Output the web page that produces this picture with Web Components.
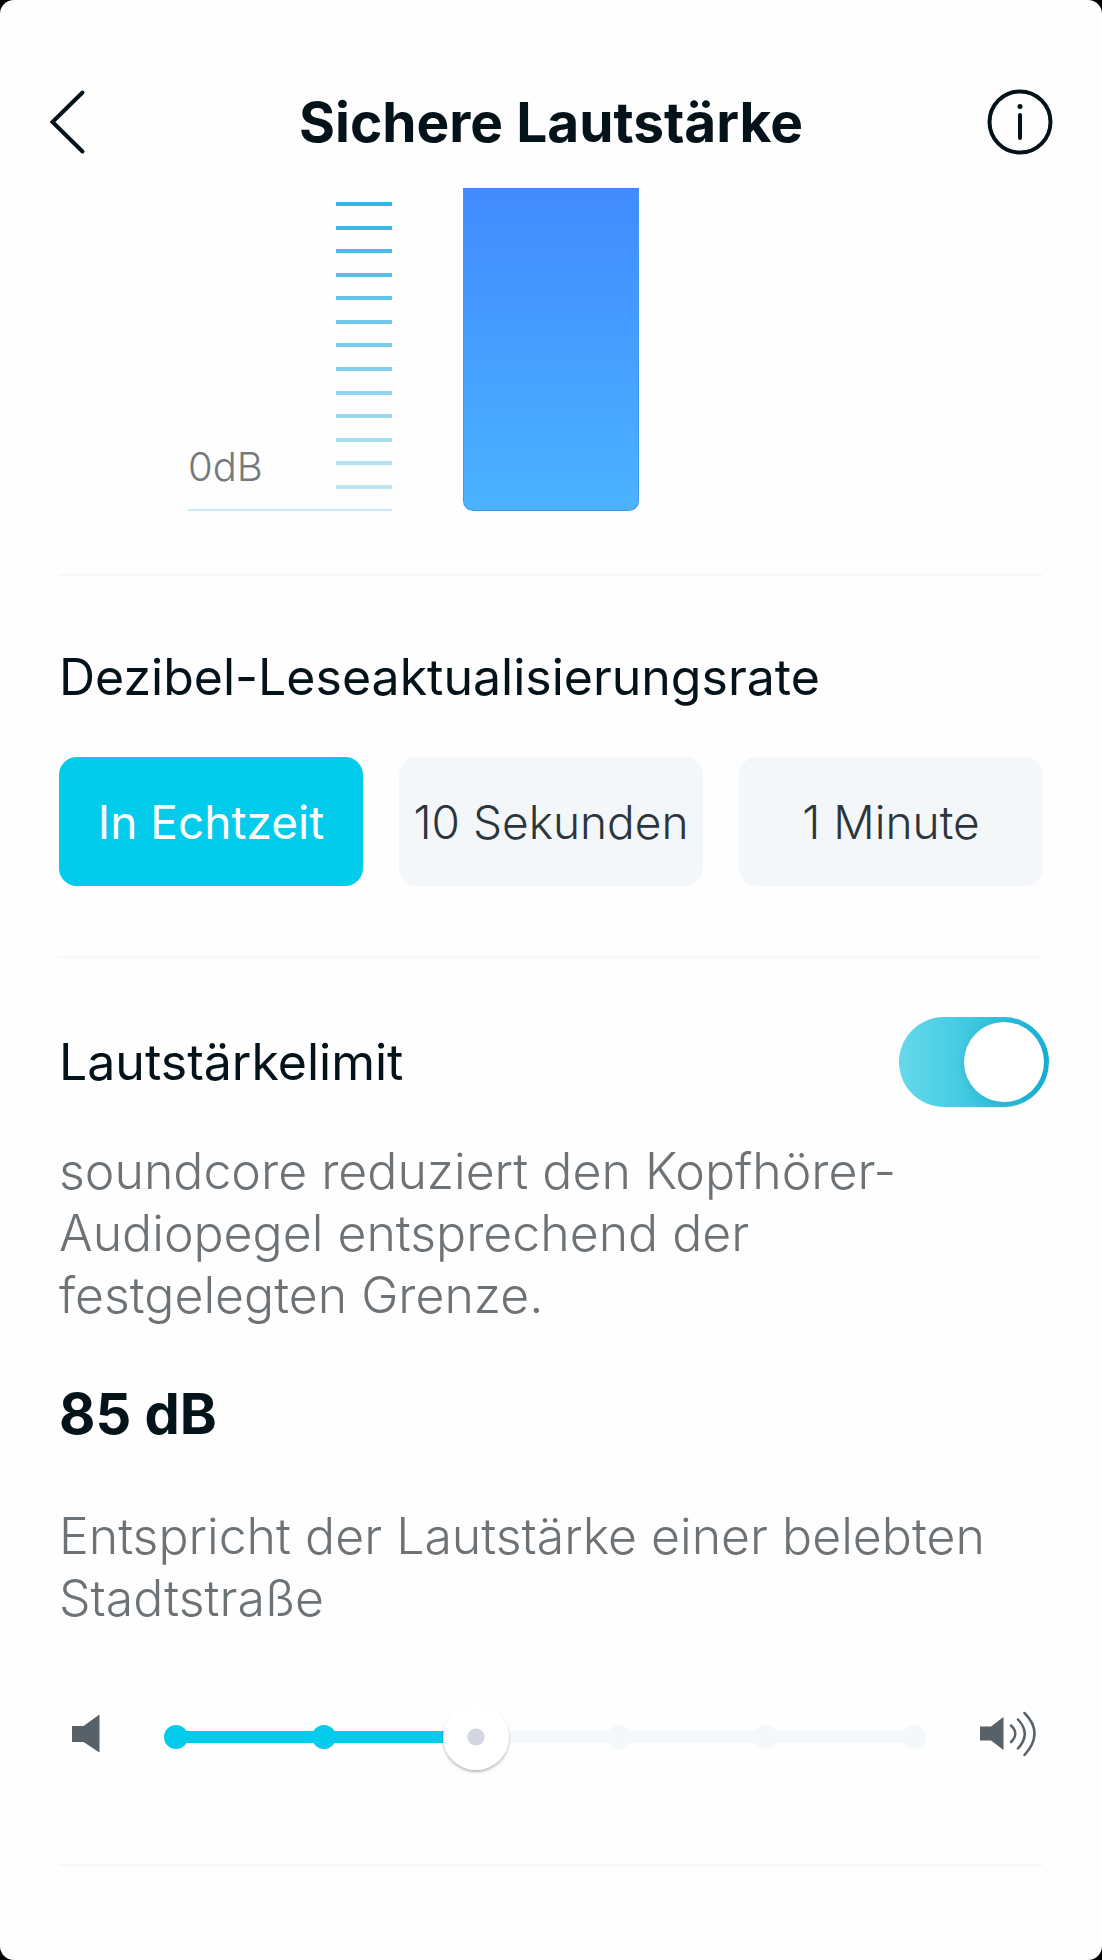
<!DOCTYPE html>
<html lang="de">
<head>
<meta charset="utf-8">
<meta name="viewport" content="width=device-width, initial-scale=1">
<title>Sichere Lautstärke</title>
<style>
  body {
    margin: 0;
    background: #000;
    color: #04121a;
    font-family: Inter, "Liberation Sans", sans-serif;
  }
</style>
</head>
<body>
<volume-page>
  <page-header slot="header">Sichere Lautstärke</page-header>
  <level-meter min-label="0dB" ticks="13"></level-meter>
  <settings-section>
    <section-title>Dezibel-Leseaktualisierungsrate</section-title>
    <segmented-control options="In Echtzeit|10 Sekunden|1 Minute" selected="0"></segmented-control>
  </settings-section>
  <settings-section>
    <switch-row checked>Lautstärkelimit</switch-row>
    <body-text>soundcore reduziert den Kopfhörer-Audiopegel entsprechend der festgelegten Grenze.</body-text>
    <limit-value>85 dB</limit-value>
    <body-text>Entspricht der Lautstärke einer belebten Stadtstraße</body-text>
    <volume-slider min="75" max="100" value="85.15" stops="6"></volume-slider>
  </settings-section>
  <settings-section></settings-section>
</volume-page>

<script>
class VolumePage extends HTMLElement {
  constructor() {
    super();
    this.attachShadow({ mode: 'open' });
    this.shadowRoot.innerHTML = `
      <style>
        :host {
          display: flex;
          flex-direction: column;
          min-height: 100vh;
          background: #fefefe;
          border-radius: 14px;
        }
      </style>
      <slot name="header"></slot>
      <slot></slot>`;
  }
}

class PageHeader extends HTMLElement {
  constructor() {
    super();
    this.attachShadow({ mode: 'open' });
    this.shadowRoot.innerHTML = `
      <style>
        :host {
          display: block;
          padding: 56px 49px 0;
        }

        header {
          display: flex;
          align-items: center;
          justify-content: space-between;
          height: 132px;
        }

        h1 {
          margin: 0;
          font-size: 55px;
          font-weight: 700;
          line-height: 64px;
        }

        button {
          display: flex;
          padding: 0;
          border: 0;
          background: none;
          color: inherit;
          cursor: pointer;
        }

        svg {
          width: 66px;
          height: 66px;
          fill: none;
          stroke: currentColor;
          stroke-width: 4;
          stroke-linecap: round;
        }
      </style>
      <header>
        <button type="button" aria-label="Zurück">
          <svg viewBox="0 0 66 66"><path d="M33.500 3.500 3.500 33l30 29.500"/></svg>
        </button>
        <h1><slot></slot></h1>
        <button type="button" aria-label="Info">
          <svg viewBox="0 0 66 66">
            <circle cx="33" cy="33" r="30.500"/>
            <path d="M33 26v23"/>
            <circle cx="33" cy="17.500" r="2.500" fill="currentColor" stroke="none"/>
          </svg>
        </button>
      </header>`;
  }
}

class LevelMeter extends HTMLElement {
  constructor() {
    super();
    this.attachShadow({ mode: 'open' });
  }

  connectedCallback() {
    const count = Number(this.getAttribute('ticks'));
    // ticks fade out towards the bottom of the scale
    const ticks = Array.from({ length: count }, (_, i) => {
      const faded = Math.round((i / (count - 1)) * 100);
      return `<i style="background: color-mix(in srgb, #bfe5f3 ${faded}%, #32b4e4)"></i>`;
    }).join('');

    this.shadowRoot.innerHTML = `
      <style>
        :host {
          display: grid;
          grid-template-columns: 1fr 176px 1fr;
          column-gap: 71px;
          height: 323px;
          padding-bottom: 63px;
        }

        .scale {
          justify-self: end;
          box-sizing: border-box;
          display: flex;
          align-items: flex-end;
          justify-content: space-between;
          width: 204px;
          padding: 14px 0 20px;
          border-bottom: 2px solid #c8e9f5;
        }

        .label {
          color: #75797c;
          font-size: 40px;
          font-weight: 300;
          line-height: 44px;
        }

        .ticks {
          display: flex;
          flex-direction: column;
          justify-content: space-between;
          align-self: stretch;
          width: 56px;
        }

        .ticks i {
          height: 4px;
        }

        .bar {
          box-sizing: border-box;
          border: 1px solid #3f97ea;
          border-top: 0;
          border-radius: 0 0 10px 10px;
          background: linear-gradient(#418aff, #4bb3ff);
        }
      </style>
      <div class="scale">
        <span class="label">${this.getAttribute('min-label')}</span>
        <div class="ticks">${ticks}</div>
      </div>
      <div class="bar"></div>`;
  }
}

class SettingsSection extends HTMLElement {
  constructor() {
    super();
    this.attachShadow({ mode: 'open' });
    this.shadowRoot.innerHTML = `
      <style>
        :host {
          display: block;
          padding: 0 59px;
        }

        hr {
          margin: 0;
          border: 0;
          border-top: 2px solid #f7f8f8;
        }
      </style>
      <hr>
      <slot></slot>`;
  }
}

class SectionTitle extends HTMLElement {
  constructor() {
    super();
    this.attachShadow({ mode: 'open' });
    this.shadowRoot.innerHTML = `
      <style>
        :host {
          display: block;
          padding: 71px 0 50px;
        }

        h2 {
          margin: 0;
          font-size: 50px;
          font-weight: 400;
          line-height: 60px;
        }
      </style>
      <h2><slot></slot></h2>`;
  }
}

class SegmentedControl extends HTMLElement {
  constructor() {
    super();
    this.attachShadow({ mode: 'open' });
  }

  connectedCallback() {
    this.render();
  }

  render() {
    const selected = Number(this.getAttribute('selected'));
    const buttons = this.getAttribute('options').split('|').map((text, i) =>
      `<button type="button" aria-pressed="${i === selected}">${text}</button>`).join('');

    this.shadowRoot.innerHTML = `
      <style>
        :host {
          display: grid;
          grid-template-columns: repeat(3, 1fr);
          gap: 36px;
          padding-bottom: 70px;
        }

        button {
          height: 129px;
          padding: 0;
          border: 0;
          border-radius: 18px;
          background: #f4f7fa;
          color: #2c353b;
          font-family: inherit;
          font-size: 46px;
          font-weight: 300;
          white-space: nowrap;
          cursor: pointer;
        }

        button[aria-pressed="true"] {
          background: #02cbec;
          color: #fff;
          font-weight: 400;
        }
      </style>
      ${buttons}`;

    this.shadowRoot.querySelectorAll('button').forEach((button, i) => {
      button.addEventListener('click', () => {
        this.setAttribute('selected', i);
        this.render();
      });
    });
  }
}

class SwitchRow extends HTMLElement {
  constructor() {
    super();
    this.attachShadow({ mode: 'open' });
  }

  connectedCallback() {
    this.shadowRoot.innerHTML = `
      <style>
        :host {
          display: flex;
          align-items: center;
          justify-content: space-between;
          margin-right: -6px;
          padding: 59px 0 33px;
        }

        label {
          font-size: 50px;
          font-weight: 400;
          line-height: 60px;
        }

        input {
          appearance: none;
          display: flex;
          justify-content: flex-start;
          box-sizing: border-box;
          width: 150px;
          height: 90px;
          margin: 0;
          padding: 5px;
          border-radius: 45px;
          background: #d5dade;
          cursor: pointer;
        }

        input::before {
          content: "";
          width: 80px;
          height: 80px;
          border-radius: 50%;
          background: #fff;
          box-shadow: -2px 2px 8px rgba(0, 90, 120, .12);
        }

        input:checked {
          justify-content: flex-end;
          background: linear-gradient(90deg, #66d9ea, #45cce3 40%, #15b0d3);
        }
      </style>
      <label for="switch"><slot></slot></label>
      <input id="switch" type="checkbox" role="switch" ${this.hasAttribute('checked') ? 'checked' : ''}>`;
  }
}

class BodyText extends HTMLElement {
  constructor() {
    super();
    this.attachShadow({ mode: 'open' });
    this.shadowRoot.innerHTML = `
      <style>
        :host {
          display: block;
        }

        p {
          margin: 0;
          color: #6c7276;
          font-size: 50px;
          font-weight: 300;
          line-height: 62px;
        }
      </style>
      <p><slot></slot></p>`;
  }
}

class LimitValue extends HTMLElement {
  constructor() {
    super();
    this.attachShadow({ mode: 'open' });
    this.shadowRoot.innerHTML = `
      <style>
        :host {
          display: block;
          padding: 52px 0 55px;
          font-size: 56px;
          font-weight: 700;
          line-height: 72px;
        }
      </style>
      <slot></slot>`;
  }
}

class VolumeSlider extends HTMLElement {
  constructor() {
    super();
    this.attachShadow({ mode: 'open' });
  }

  connectedCallback() {
    const { min, max, value } = this.range;
    const stops = '<i></i>'.repeat(Number(this.getAttribute('stops')));

    this.shadowRoot.innerHTML = `
      <style>
        :host {
          display: flex;
          align-items: center;
          padding: 75px 7px 94px 13px;
          color: #586168;
        }

        svg {
          flex: none;
          height: 66px;
          fill: currentColor;
        }

        .quiet {
          width: 28px;
          margin-right: 43px;
        }

        .loud {
          width: 56px;
          margin-left: 33px;
        }

        .slider {
          flex: 1;
          display: grid;
          align-items: center;
        }

        .slider > * {
          grid-area: 1 / 1;
        }

        .rail {
          display: flex;
          align-items: center;
          justify-content: space-between;
          height: 12px;
          margin: 0 21px;
          background: linear-gradient(90deg, #02cbec var(--fill), #f5f8fa var(--fill)) 12px 0 / calc(100% - 24px) no-repeat;
        }

        .rail i {
          width: 24px;
          height: 24px;
          border-radius: 50%;
          background: #f3f8fb;
        }

        .rail i.on {
          background: #02cbec;
        }

        input {
          appearance: none;
          width: 100%;
          height: 66px;
          margin: 0;
          background: none;
          cursor: pointer;
        }

        input::-webkit-slider-thumb {
          appearance: none;
          width: 66px;
          height: 66px;
          border-radius: 50%;
          background: radial-gradient(circle, #d3d5e3 8px, #fff 9px);
          box-shadow: 0 2px 3px rgba(0, 0, 0, .28);
        }
      </style>
      <svg class="quiet" viewBox="0 0 28 66" aria-hidden="true">
        <path d="M0 22h11.500L27.500 10.500v38L11.500 38H0z"/>
      </svg>
      <div class="slider">
        <div class="rail">${stops}</div>
        <input type="range" aria-label="Lautstärkelimit in dB" min="${min}" max="${max}" step="any" value="${value}">
      </div>
      <svg class="loud" viewBox="0 0 56 66" aria-hidden="true">
        <path d="M0 22.500h11L23.500 13v33L11 36.500H0z"/>
        <g fill="none" stroke="currentColor" stroke-width="2.500" stroke-linecap="round">
          <path d="M31 21.500q8.500 8 0 16.500"/>
          <path d="M38 15.500q13.500 14 0 29"/>
          <path d="M44.500 9q20 20 0 42"/>
        </g>
      </svg>`;

    this.shadowRoot.querySelector('input').addEventListener('input', (event) => {
      this.paint(Number(event.target.value));
    });
    this.paint(value);
  }

  get range() {
    return {
      min: Number(this.getAttribute('min')),
      max: Number(this.getAttribute('max')),
      value: Number(this.getAttribute('value')),
    };
  }

  paint(value) {
    const { min, max } = this.range;
    const share = (value - min) / (max - min);
    const dots = this.shadowRoot.querySelectorAll('.rail i');
    this.shadowRoot.querySelector('.rail').style.setProperty('--fill', `${share * 100}%`);
    dots.forEach((dot, i) => dot.classList.toggle('on', i / (dots.length - 1) <= share));
  }
}

customElements.define('volume-page', VolumePage);
customElements.define('page-header', PageHeader);
customElements.define('level-meter', LevelMeter);
customElements.define('settings-section', SettingsSection);
customElements.define('section-title', SectionTitle);
customElements.define('segmented-control', SegmentedControl);
customElements.define('switch-row', SwitchRow);
customElements.define('body-text', BodyText);
customElements.define('limit-value', LimitValue);
customElements.define('volume-slider', VolumeSlider);
</script>
</body>
</html>
